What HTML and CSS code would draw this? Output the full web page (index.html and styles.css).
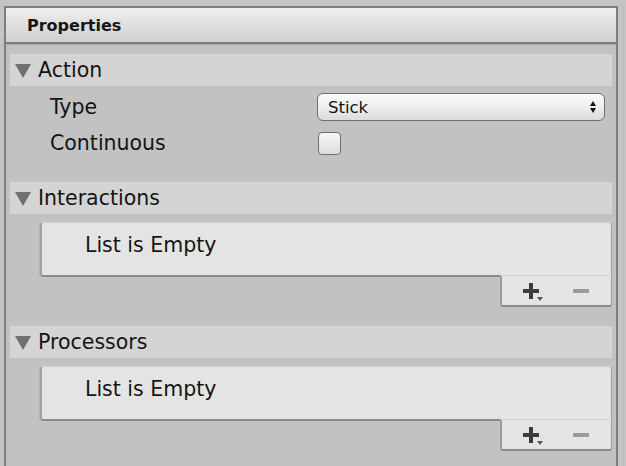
FILE: index.html
```html
<!DOCTYPE html>
<html>
<head>
<meta charset="utf-8">
<link rel="stylesheet" href="styles.css">
</head>
<body>
<div class="panel">
  <div class="panel-header">Properties</div>
  <div class="panel-body">
    <section class="group">
      <div class="band"><span class="tri"></span>Action</div>
      <div class="prop-row">
        <span class="label">Type</span>
        <div class="dropdown"><span>Stick</span><span class="updown"><i class="up"></i><i class="down"></i></span></div>
      </div>
      <div class="prop-row">
        <span class="label">Continuous</span>
        <span class="checkbox"></span>
      </div>
    </section>
    <section class="group list-group">
      <div class="band"><span class="tri"></span>Interactions</div>
      <div class="list-box">List is Empty</div>
      <div class="list-footer">
        <span class="plus"><i class="h"></i><i class="v"></i><i class="drop"></i></span>
        <span class="minus"></span>
      </div>
    </section>
    <section class="group list-group">
      <div class="band"><span class="tri"></span>Processors</div>
      <div class="list-box">List is Empty</div>
      <div class="list-footer">
        <span class="plus"><i class="h"></i><i class="v"></i><i class="drop"></i></span>
        <span class="minus"></span>
      </div>
    </section>
  </div>
</div>
</body>
</html>
```
FILE: styles.css
```css
html, body {
  margin: 0;
  padding: 0;
}
body {
  background: #c4c4c4;
  width: 626px;
  height: 466px;
  overflow: hidden;
  font-family: "DejaVu Sans", "Verdana", sans-serif;
  color: #141414;
}
.panel {
  margin: 6px 0 0 4px;
  width: 610px;
  height: 460px;
  border: 2px solid #7e7e7e;
  border-bottom: none;
  background: #c2c2c2;
  box-shadow: 5px 0 0 #c5c5c5, 6px 0 0 #b9b9b9;
}
.panel-header {
  height: 34px;
  box-sizing: border-box;
  padding-left: 21px;
  display: flex;
  align-items: center;
  font-weight: bold;
  font-size: 16px;
  color: #161616;
  background: linear-gradient(#efefef, #e2e2e2 40%, #cfcfcf);
  border-bottom: 2px solid #7e7e7e;
  box-shadow: 0 1px 0 #a9a9a9;
  height: 36px;
}
.panel-body {
  padding: 10px 4px 0 4px;
  display: flex;
  flex-direction: column;
}
.group {
  display: flex;
  flex-direction: column;
}
.band {
  height: 32px;
  background: #d4d4d4;
  display: flex;
  align-items: center;
  font-size: 20.5px;
  padding-left: 5px;
}
.tri {
  width: 0;
  height: 0;
  border-left: 8px solid transparent;
  border-right: 8px solid transparent;
  border-top: 14px solid #707070;
  margin-right: 7px;
  margin-top: 1px;
}
.prop-row {
  height: 36px;
  display: flex;
  align-items: center;
  padding-left: 40px;
  font-size: 20.5px;
}
.group > .band + .prop-row {
  margin-top: 3px;
}
.label {
  width: 267px;
}
.dropdown {
  width: 288px;
  height: 28px;
  box-sizing: border-box;
  border: 1.5px solid #6f6f6f;
  border-radius: 6px;
  background: linear-gradient(#fbfbfb, #eeeeee 50%, #dcdcdc);
  display: flex;
  align-items: center;
  justify-content: space-between;
  padding: 0 8px 0 10px;
  font-size: 16.5px;
}
.updown {
  display: flex;
  flex-direction: column;
  gap: 2px;
}
.updown i {
  display: block;
  width: 0;
  height: 0;
  border-left: 3.5px solid transparent;
  border-right: 3.5px solid transparent;
}
.updown .up { border-bottom: 5px solid #111; }
.updown .down { border-top: 5px solid #111; }
.checkbox {
  width: 23px;
  height: 23px;
  box-sizing: border-box;
  border: 1.5px solid #6f6f6f;
  border-radius: 4px;
  background: linear-gradient(#f8f8f8, #dcdcdc);
  margin-left: 1px;
}
.list-group {
  margin-top: 21px;
}
.list-group + .list-group {
  margin-top: 19px;
}
.list-box {
  margin: 8px 0 0 30px;
  height: 55px;
  box-sizing: border-box;
  background: #e4e4e4;
  border-left: 2px solid #a2a2a2;
  border-right: 1px solid #9e9e9e;
  border-bottom: 2px solid #8a8a8a;
  border-top: 1px solid #d2d2d2;
  border-radius: 3px 3px 0 3px;
  box-shadow: -1px 0 0 #b4b4b4;
  padding: 0 0 8px 43px;
  display: flex;
  align-items: center;
  font-size: 20.5px;
}
.list-footer {
  align-self: flex-end;
  width: 112px;
  height: 32px;
  margin-top: -2px;
  box-sizing: border-box;
  background: #e4e4e4;
  border-top: 1px solid #d4d4d4;
  border-left: 2px solid #9c9c9c;
  border-right: 1px solid #9e9e9e;
  border-bottom: 2px solid #8a8a8a;
  border-radius: 0 0 3px 3px;
  display: flex;
  align-items: center;
  padding: 0 0 2px 21px;
}
.plus {
  position: relative;
  width: 16px;
  height: 16px;
  margin-top: 2px;
}
.plus .h {
  position: absolute;
  left: 0;
  top: 6px;
  width: 16px;
  height: 4px;
  background: #3d3d3d;
}
.plus .v {
  position: absolute;
  left: 6px;
  top: 0;
  width: 4px;
  height: 16px;
  background: #3d3d3d;
}
.plus .drop {
  position: absolute;
  left: 14px;
  top: 14px;
  width: 0;
  height: 0;
  border-left: 3px solid transparent;
  border-right: 3px solid transparent;
  border-top: 4px solid #555;
}
.minus {
  width: 16px;
  height: 4px;
  background: #9c9c9c;
  margin-left: 34px;
  margin-top: 2px;
}
```
